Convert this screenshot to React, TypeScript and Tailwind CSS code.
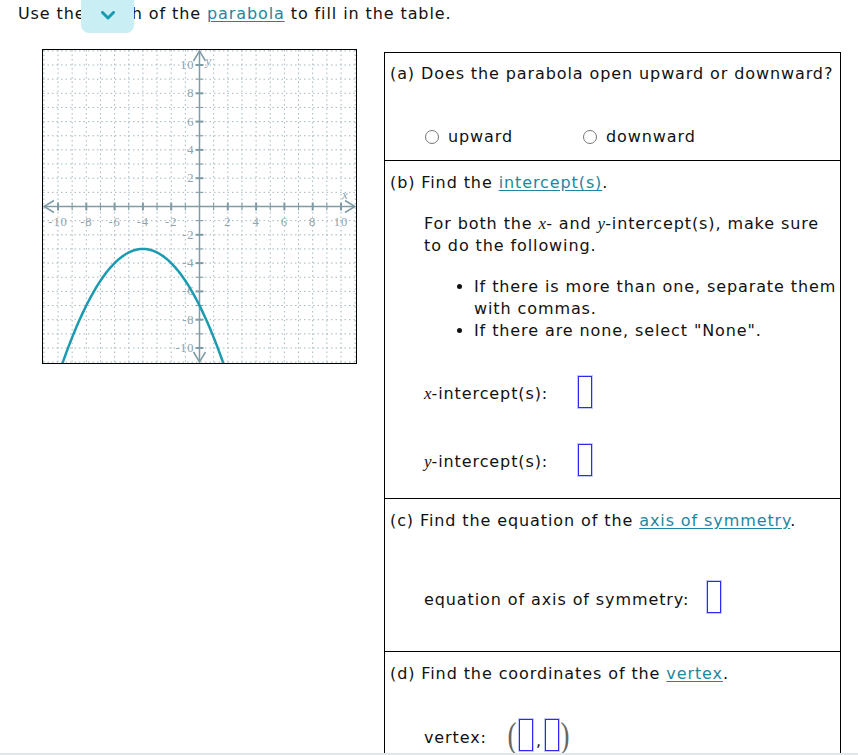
import React from 'react';

const U = 14.15;
const C = 156.5;
const X = (x: number) => C + U * x;
const Y = (y: number) => C - U * y;

const range = Array.from({ length: 23 }, (_, i) => i - 11);
const labels = [-10, -8, -6, -4, -2, 2, 4, 6, 8, 10];

const curve = (() => {
  const pts: string[] = [];
  for (let x = -9.7; x <= 1.71; x += 0.1) {
    const y = -((x + 4) ** 2) / 4 - 3;
    pts.push(`${X(x).toFixed(2)},${Y(y).toFixed(2)}`);
  }
  return 'M' + pts.join(' L');
})();

const Graph = () => (
  <div className="w-[315px] h-[315px] border border-black shrink-0">
    <svg width="313" height="313" viewBox="0 0 313 313">
      {/* grid */}
      {range.map((i) => (
        <g key={i} stroke="#a3b7bf" strokeWidth="1" strokeDasharray="1.5 3">
          <line x1={X(i)} y1="0" x2={X(i)} y2="313" />
          <line x1="0" y1={Y(i)} x2="313" y2={Y(i)} />
        </g>
      ))}
      {/* axes */}
      <g stroke="#7f9ca6" strokeWidth="1.5" fill="none">
        <line x1="1" y1={Y(0)} x2="312" y2={Y(0)} />
        <line x1={X(0)} y1="1" x2={X(0)} y2="312" />
        <polyline points={`11,${Y(0) - 6} 1,${Y(0)} 11,${Y(0) + 6}`} />
        <polyline points={`302,${Y(0) - 6} 312,${Y(0)} 302,${Y(0) + 6}`} />
        <polyline points={`${X(0) - 6},11 ${X(0)},1 ${X(0) + 6},11`} />
        <polyline points={`${X(0) - 6},302 ${X(0)},312 ${X(0) + 6},302`} />
        {range
          .filter((i) => i !== 0 && Math.abs(i) <= 10)
          .map((i) => (
            <g key={i} strokeWidth={i % 2 === 0 ? 2 : 1}>
              <line x1={X(i)} y1={Y(0) - 4} x2={X(i)} y2={Y(0) + 4} />
              <line x1={X(0) - 4} y1={Y(i)} x2={X(0) + 4} y2={Y(i)} />
            </g>
          ))}
      </g>
      {/* labels */}
      <g fill="#8ea4ad" fontFamily="'Liberation Serif', serif" fontSize="12.5">
        {labels.map((i) => (
          <text key={'x' + i} x={X(i)} y={Y(0) + 19} textAnchor="middle">
            {i}
          </text>
        ))}
        {labels.map((i) => (
          <text key={'y' + i} x={X(0) - 5} y={Y(i) + 4} textAnchor="end">
            {i}
          </text>
        ))}
        <text x={X(0) + 6} y="15" fontStyle="italic" fontSize="13">y</text>
        <text x="299" y={Y(0) - 8} fontStyle="italic" fontSize="13">x</text>
      </g>
      <path d={curve} fill="none" stroke="#1b9bb0" strokeWidth="2.5" />
    </svg>
  </div>
);

const Box = () => (
  <span className="inline-block w-[14px] h-[32px] border-[1.5px] border-[#2a2af2] shadow-[0_0_0_1px_#c5c8f8] align-middle" />
);

const Radio = ({ label }: { label: string }) => (
  <span className="flex items-center gap-[9px]">
    <span className="w-[14px] h-[14px] rounded-full border border-[#777] bg-white" />
    {label}
  </span>
);

const MathVar = ({ v }: { v: string }) => (
  <span className="italic text-[17px] tracking-normal" style={{ fontFamily: "'Liberation Serif', serif" }}>{v}</span>
);

const Link = ({ children }: { children: React.ReactNode }) => (
  <span className="text-[#1f86a0] underline underline-offset-2">{children}</span>
);

const Paren = ({ ch }: { ch: string }) => (
  <span
    className="text-[#666] text-[36px] font-light leading-none scale-x-75"
    style={{ fontFamily: "'Liberation Serif', serif" }}
  >
    {ch}
  </span>
);

export default function App() {
  return (
    <div
      className="relative h-[755px] overflow-hidden bg-white text-[16px] leading-[22px] tracking-[0.9px] text-[#111]"
      style={{ fontFamily: "'DejaVu Sans', Verdana, sans-serif" }}
    >
      <div className="pt-[3px] pl-[18px]">
        Use the graph of the <Link>parabola</Link> to fill in the table.
      </div>
      <div className="absolute left-[81px] top-[-8px] w-[53px] h-[41px] rounded-lg bg-[#c9eef4] flex items-center justify-center pt-[6px]">
        <svg width="14" height="9" viewBox="0 0 14 9">
          <polyline points="1.5,1.5 7,7 12.5,1.5" fill="none" stroke="#1b9bb0" strokeWidth="3" strokeLinecap="round" strokeLinejoin="round" />
        </svg>
      </div>

      <div className="flex items-start mt-[24px] pl-[42px] gap-[27px]">
        <Graph />
        <div className="mt-[3px] w-[457px] border border-black border-b-0">
          {/* (a) */}
          <div className="h-[108px] border-b border-black pl-[5px] pt-[10px]">
            <div>(a) Does the parabola open upward or downward?</div>
            <div className="flex mt-[41px] pl-[35px]">
              <div className="w-[158px]"><Radio label="upward" /></div>
              <Radio label="downward" />
            </div>
          </div>
          {/* (b) */}
          <div className="h-[338px] border-b border-black pl-[5px] pt-[11px]">
            <div>(b) Find the <Link>intercept(s)</Link>.</div>
            <div className="pl-[34px]">
              <div className="mt-[19px] whitespace-nowrap">
                For both the <MathVar v="x" />- and <MathVar v="y" />-intercept(s), make sure
                <br />
                to do the following.
              </div>
              <ul className="mt-[19px] pl-[50px] list-disc whitespace-nowrap">
                <li>
                  If there is more than one, separate them
                  <br />
                  with commas.
                </li>
                <li>If there are none, select "None".</li>
              </ul>
              <div className="mt-[34px] flex items-center h-[32px]">
                <span className="w-[154px] pt-[4px]"><MathVar v="x" />-intercept(s):</span>
                <Box />
              </div>
              <div className="mt-[36px] flex items-center h-[32px]">
                <span className="w-[154px] pt-[4px]"><MathVar v="y" />-intercept(s):</span>
                <Box />
              </div>
            </div>
          </div>
          {/* (c) */}
          <div className="h-[153px] border-b border-black pl-[5px] pt-[11px]">
            <div>(c) Find the equation of the <Link>axis of symmetry</Link>.</div>
            <div className="pl-[34px] mt-[49px] flex items-center h-[32px]">
              <span className="w-[283px] pt-[6px]">equation of axis of symmetry:</span>
              <Box />
            </div>
          </div>
          {/* (d) */}
          <div className="h-[140px] pl-[5px] pt-[11px]">
            <div>(d) Find the coordinates of the <Link>vertex</Link>.</div>
            <div className="pl-[34px] mt-[34px] flex items-center h-[32px]">
              <span className="w-[82px] pt-[6px]">vertex:</span>
              <Paren ch="(" />
              <Box />
              <span className="mx-[3px] pt-[12px]">,</span>
              <Box />
              <Paren ch=")" />
            </div>
          </div>
        </div>
      </div>
      <div className="absolute left-0 right-0 bottom-0 h-[2px] bg-[#e3e6e8]" />
    </div>
  );
}
